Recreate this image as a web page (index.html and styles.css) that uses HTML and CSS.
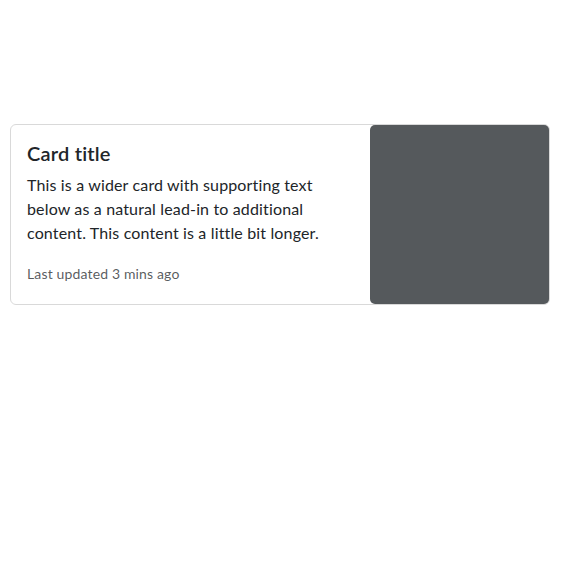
FILE: index.html
```html
<!DOCTYPE html>
<html lang="en">
<head>
<meta charset="utf-8">
<title>Card</title>
<link rel="stylesheet" href="styles.css">
</head>
<body>
<div class="page">
  <div class="card">
    <div class="card-body">
      <h5 class="card-title">Card title</h5>
      <p class="card-text">This is a wider card with supporting text below as a natural lead-in to additional content. This content is a little bit longer.</p>
      <p class="card-text last"><small class="muted">Last updated 3 mins ago</small></p>
    </div>
    <div class="card-img">
      <svg class="placeholder" viewBox="0 0 180 180" preserveAspectRatio="none" aria-hidden="true"><rect width="180" height="180" fill="#55595c"/></svg>
    </div>
  </div>
</div>
</body>
</html>
```
FILE: styles.css
```css
* { box-sizing: border-box; }
html, body { margin: 0; padding: 0; background: #fff; }
body {
  font-family: Lato, "Noto Sans", sans-serif;
  font-size: 16px;
  line-height: 1.5;
  color: #212529;
  letter-spacing: 0.15px;
}
.page {
  padding: 124px 0 0 10px;
}
.card {
  width: 540px;
  display: grid;
  grid-template-columns: 2fr 1fr;
  border: 1px solid #d9d9d9;
  border-radius: 6px;
  background: #fff;
}
.card-body {
  padding: 16px;
}
.card-title {
  margin: 0 0 8px;
  font-size: 20px;
  font-weight: 600;
  line-height: 1.2;
  letter-spacing: 0.2px;
}
.card-text {
  margin: 0 0 16px;
}
.card-text.last { margin-bottom: 0; }
.muted {
  font-size: 14px;
  color: rgba(33, 37, 41, 0.75);
}
.card-img {
  aspect-ratio: 1 / 1;
}
.placeholder {
  display: block;
  width: 100%;
  height: 100%;
  border-radius: 5px;
  box-shadow: inset -1px 0 0 rgba(0, 0, 0, 0.25);
}
```
